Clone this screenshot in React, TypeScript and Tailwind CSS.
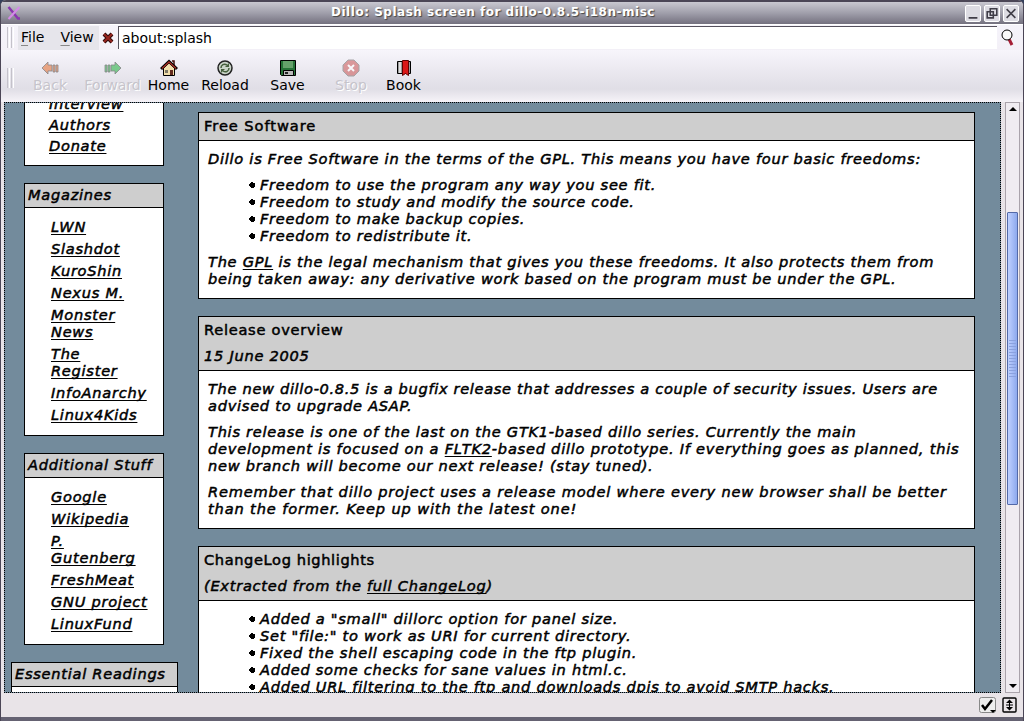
import type { ReactNode } from "react";

const A = ({ children }: { children: ReactNode }) => (
  <a className="underline decoration-1 underline-offset-[2px] [text-decoration-skip-ink:none]">{children}</a>
);

const Grip = ({ h }: { h: string }) => (
  <div className={"flex gap-[1px] " + h}>
    <i className="w-[1px] bg-[#c4c2ca]" /><i className="w-[1px] bg-white" />
    <i className="w-[1px] bg-[#c4c2ca]" /><i className="w-[1px] bg-white" />
  </div>
);

function Tool({ w, label, off, children }: { w: string; label: string; off?: boolean; children: ReactNode }) {
  return (
    <div className={"flex shrink-0 flex-col items-center " + w}>
      <svg width="18" height="18" viewBox="0 0 18 18" className={off ? "opacity-60" : ""}>{children}</svg>
      <span className={"mt-[-1px] text-[14px] leading-[18px] whitespace-nowrap " + (off ? "text-[#c6c4cb] [text-shadow:1px_1px_0_white]" : "text-black")}>{label}</span>
    </div>
  );
}

function Side({ title, box, links }: { title: string; box: string; links: { rows: string[] }[] }) {
  return (
    <section className={"border border-black bg-white " + box}>
      <h2 className="h-6 border-b border-black bg-[#cecece] pl-[3px] leading-[21px] whitespace-nowrap">{title}</h2>
      <ul className="flex flex-col gap-[5px] pt-[10px] pl-[26px] leading-[17px]">
        {links.map((l) => (
          <li key={l.rows[0]}>{l.rows.map((r) => <div key={r} className="h-[17px] whitespace-nowrap"><A>{r}</A></div>)}</li>
        ))}
      </ul>
    </section>
  );
}

const Para = ({ lines }: { lines: ReactNode[] }) => (
  <div className="pl-[9px]">{lines.map((l, i) => <div key={i} className="h-[17px] whitespace-nowrap">{l}</div>)}</div>
);

const Bullets = ({ items }: { items: string[] }) => (
  <ul className="pl-[50px]">
    {items.map((t) => (
      <li key={t} className="flex h-[17px] items-center whitespace-nowrap">
        <svg width="6" height="6" shapeRendering="crispEdges" className="mt-[1px] mr-[5px]"><path d="M2 0h2v1h2v4H5v1H2V5H1V4H0V2h1V1h1z" /></svg>{t}
      </li>
    ))}
  </ul>
);

export default function App() {
  return (
    <div className="h-[721px] w-[1024px] bg-[#35405c]">
      <div className="flex h-[721px] w-[1024px] flex-col overflow-hidden rounded-t-md border-x-[1px] border-[#4b4656] bg-[#e9e4e8] font-['DejaVu_Sans',sans-serif] text-[15px] text-black">
        <header className="flex h-6 shrink-0 items-center border-t-2 border-[#4b4656] bg-linear-to-b from-[#c9c8d0] via-[#a09fab] to-[#74717f] pl-[6px] pr-[4px]">
          <svg width="14" height="14" viewBox="0 0 14 14" fill="none">
            <path d="M1.500 1L11 12.500h2" stroke="#8a35b0" strokeWidth="2.500" /><path d="M12.500 1L1.500 13" stroke="#d58ae8" strokeWidth="2" />
          </svg>
          <h1 className="flex-1 pb-[2px] text-center text-[12px] font-bold tracking-[0.52px] text-white [text-shadow:1px_1px_1px_#444]">Dillo: Splash screen for dillo-0.8.5-i18n-misc</h1>
          <div className="flex gap-[3px]">
            {["M3 13h10", "M2.5 6h7v7h-7zM6 2.500h7.500v7.500H6z", "M3 3l10 10M13 3L3 13"].map((d) => (
              <svg key={d} width="16" height="17" viewBox="0 0 16 16" className="rounded-[2px] border border-white bg-[#dddce3]"><path d={d} stroke="#403e48" strokeWidth="1.8" fill="none" /></svg>
            ))}
          </div>
        </header>
        <div className="flex h-[26px] shrink-0 items-center border-t border-white bg-linear-to-b from-[#f5f3fa] to-[#f3f0f7] pl-[6px] text-[14px]">
          <Grip h="h-[21px]" />
          <nav className="ml-[4px] flex h-6 w-[81px] items-center gap-[16px] bg-[#e6e5eb] pl-[3px]">
            <span><u className="decoration-[#888] underline-offset-[3px]">F</u>ile</span><span><u className="decoration-[#888] underline-offset-[3px]">V</u>iew</span>
          </nav>
          <svg width="12" height="12" viewBox="0 0 12 12" className="mr-[4px] ml-[3px]"><path d="M2 2l8 8M10 2l-8 8" stroke="#300808" strokeWidth="4" /><path d="M2 2l8 8M10 2l-8 8" stroke="#98251f" strokeWidth="2" /></svg>
          <div className="h-[23px] w-[879px] border-t border-l border-[#55515c] bg-white pl-[3px] leading-[22px]">about:splash</div>
          <svg width="14" height="18" viewBox="0 0 14 18" className="ml-[4px]"><path d="M8 10l3 6" stroke="#a41d34" strokeWidth="3" /><circle cx="6" cy="6" r="5" fill="#fafafa" stroke="#000" /></svg>
        </div>
        <div className="flex h-[52px] shrink-0 bg-linear-to-b from-[#f7f5fb] via-[#e0dee6] via-75% to-[#f6f3f8] pt-[9px] pl-[6px]">
          <div className="pt-[9px]"><Grip h="h-[20px]" /></div>
          <div className="flex pl-[6px]">
            <Tool w="w-[60px]" label="Back" off><path d="M1 9l6-6v3h4v6H7v3zM12 6h2v7h-2zM15 6h2v7h-2z" fill="#e4763c" stroke="#444" strokeWidth=".8" /></Tool>
            <Tool w="w-[65px]" label="Forward" off><path d="M17 9l-6-6v3H7v6h4v3zM4 6h2v7H4zM1 6h2v7H1z" fill="#2fb44a" stroke="#444" strokeWidth=".8" /></Tool>
            <Tool w="w-[47px]" label="Home"><path d="M3.500 9v7.500h11V9L9 4z" fill="#f2dfab" stroke="#000" /><path d="M12 2h2v4" fill="none" stroke="#400d08" strokeWidth="1.500" /><path d="M1 10l8-7.500 8 7.500" fill="none" stroke="#000" strokeWidth="3" /><path d="M2 9.500l7-6.500 7 6.500" fill="none" stroke="#a22c21" strokeWidth="1.500" /><path d="M10 11h3v5h-3z" fill="#642b1d" /><path d="M5 11h3v3H5z" fill="#7f7a67" /></Tool>
            <Tool w="w-[66px]" label="Reload"><circle cx="9" cy="9" r="7" fill="#c9d3c7" stroke="#222" strokeWidth="1.5" /><path d="M5 9c0-3 3-5 6-3M13 9c0 3-3 5-6 3" fill="none" stroke="#455f3c" strokeWidth="1.500" /><path d="M9 8l4-4v4zM9 10l-4 4v-4z" fill="#455f3c" /></Tool>
            <Tool w="w-[59px]" label="Save"><path d="M1.500 1.500h15v15h-14l-1-1z" fill="#267337" stroke="#000" /><path d="M4 2h10v7H4z" fill="#65a16a" /><path d="M4.500 11.500h10v5h-10z" fill="#bbb" stroke="#000" /><path d="M6 13h3v2H6z" fill="#222" /></Tool>
            <Tool w="w-[68px]" label="Stop" off><path d="M6 1h6l5 5v6l-5 5H6l-5-5V6z" fill="#cc6060" stroke="#777" /><path d="M6 6l6 6M12 6l-6 6" stroke="white" strokeWidth="2" /></Tool>
            <Tool w="w-[37px]" label="Book"><path d="M2.500 2.500h13v12h-13z" fill="#999" stroke="#000" /><path d="M4 3h2v11H4z" fill="#ddd" /><path d="M7.500 1.500h6v15l-3-2-3 2z" fill="#db1717" stroke="#610000" /></Tool>
          </div>
        </div>
        <div className="flex h-[591px] shrink-0 pl-[3px]">
          <main className="flex h-[591px] w-[997px] shrink-0 overflow-hidden border border-dotted border-black bg-[#738b9c] text-[14.6px] tracking-[0.73px] italic leading-[17px] [-webkit-text-stroke:0.5px_black]">
            <div className="flex w-[193px] shrink-0 flex-col pl-[6px]">
              <div className="ml-[13px] h-[63px] w-[140px] shrink-0 overflow-hidden border-x border-b border-black bg-white pl-[24px]">
                {["Interview", "Authors", "Donate"].map((t) => <div key={t} className="mt-[-8px] mb-[12px] h-[17px]"><A>{t}</A></div>)}
              </div>
              <Side title="Magazines" box="ml-[13px] mt-[17px] h-[253px] w-[140px] shrink-0" links={[{ rows: ["LWN"] }, { rows: ["Slashdot"] }, { rows: ["KuroShin"] }, { rows: ["Nexus M."] }, { rows: ["Monster", "News"] }, { rows: ["The", "Register"] }, { rows: ["InfoAnarchy"] }, { rows: ["Linux4Kids"] }]} />
              <Side title="Additional Stuff" box="ml-[13px] mt-[17px] h-[192px] w-[140px] shrink-0" links={[{ rows: ["Google"] }, { rows: ["Wikipedia"] }, { rows: ["P.", "Gutenberg"] }, { rows: ["FreshMeat"] }, { rows: ["GNU project"] }, { rows: ["LinuxFund"] }]} />
              <Side title="Essential Readings" box="mt-[17px] h-[60px] w-[167px] shrink-0" links={[]} />
            </div>
            <div className="flex w-[777px] shrink-0 flex-col pt-[9px]">
              <section className="h-[187px] shrink-0 border border-black bg-white">
                <h2 className="h-[28px] border-b border-black bg-[#cecece] pl-[5px] leading-[25px] tracking-[0.95px] not-italic">Free Software</h2>
                <div className="flex flex-col gap-[9px] pt-[9px]">
                  <Para lines={["Dillo is Free Software in the terms of the GPL. This means you have four basic freedoms:"]} />
                  <Bullets items={["Freedom to use the program any way you see fit.", "Freedom to study and modify the source code.", "Freedom to make backup copies.", "Freedom to redistribute it."]} />
                  <Para lines={[<>The <A>GPL</A> is the legal mechanism that gives you these freedoms. It also protects them from</>, "being taken away: any derivative work based on the program must be under the GPL."]} />
                </div>
              </section>
              <section className="mt-[17px] h-[213px] shrink-0 border border-black bg-white">
                <div className="flex h-[54px] flex-col gap-[9px] border-b border-black bg-[#cecece] pt-[4px] pl-[5px]"><h2 className="not-italic">Release overview</h2><p>15 June 2005</p></div>
                <div className="flex flex-col gap-[9px] pt-[9px]">
                  <Para lines={[<span className="tracking-[0.67px]">The new dillo-0.8.5 is a bugfix release that addresses a couple of security issues. Users are</span>, "advised to upgrade ASAP."]} />
                  <Para lines={["This release is one of the last on the GTK1-based dillo series. Currently the main", <span className="tracking-[0.76px]">development is focused on a <A>FLTK2</A>-based dillo prototype. If everything goes as planned, this</span>, "new branch will become our next release! (stay tuned)."]} />
                  <Para lines={[<span className="tracking-[0.78px]">Remember that dillo project uses a release model where every new browser shall be better</span>, <span className="tracking-[0.86px]">than the former. Keep up with the latest one!</span>]} />
                </div>
              </section>
              <section className="mt-[17px] h-[213px] shrink-0 border border-black bg-white">
                <div className="flex h-[54px] flex-col gap-[9px] border-b border-black bg-[#cecece] pt-[4px] pl-[5px]"><h2 className="tracking-[0.62px] not-italic">ChangeLog highlights</h2><p>(Extracted from the <A>full ChangeLog</A>)</p></div>
                <div className="pt-[9px]"><Bullets items={["Added a \"small\" dillorc option for panel size.", "Set \"file:\" to work as URI for current directory.", "Fixed the shell escaping code in the ftp plugin.", "Added some checks for sane values in html.c.", "Added URL filtering to the ftp and downloads dpis to avoid SMTP hacks."]} /></div>
              </section>
            </div>
          </main>
          <div className="ml-[4px] flex h-[591px] w-[15px] shrink-0 flex-col items-center border border-[#aaa3ab] bg-[#f0ecf1]">
            <svg width="8" height="4" className="mt-[4px] shrink-0"><path d="M4 0l4 4H0z" /></svg>
            <div className="mt-[101px] flex h-[293px] w-[11px] shrink-0 flex-col items-center justify-center gap-[2px] rounded-[1px] border border-[#5269a8] bg-linear-to-r from-[#bfd0ff] to-[#8da9ed]">
              {Array.from({ length: 13 }, (_, i) => <i key={i} className="h-[1px] w-[7px] bg-[#8ba2df]" />)}
            </div>
            <svg width="8" height="4" className="mt-[179px] shrink-0"><path d="M0 0h8L4 4z" /></svg>
          </div>
        </div>
        <footer className="flex h-[28px] shrink-0 items-start justify-end gap-[6px] border-b-4 border-[#656272] pt-[4px] pr-[6px]">
          <svg width="17" height="17" viewBox="0 0 17 17"><rect x=".5" y=".5" width="16" height="15" rx="2" fill="#eee" stroke="#888" /><path d="M3 8l3 4 7-9" fill="none" stroke="#000" strokeWidth="2.500" /><path d="M11 13h6l-3 3z" /></svg>
          <svg width="15" height="16" viewBox="0 0 15 16"><rect x="1" y="1" width="13" height="14" rx="1" fill="none" stroke="#000" strokeWidth="1.4" /><path d="M7.500 2.500l3.500 3.500H4zM7.500 13.500L11 10H4z" /><path d="M4 8h7M7.500 5v6" stroke="#000" /></svg>
        </footer>
      </div>
    </div>
  );
}
